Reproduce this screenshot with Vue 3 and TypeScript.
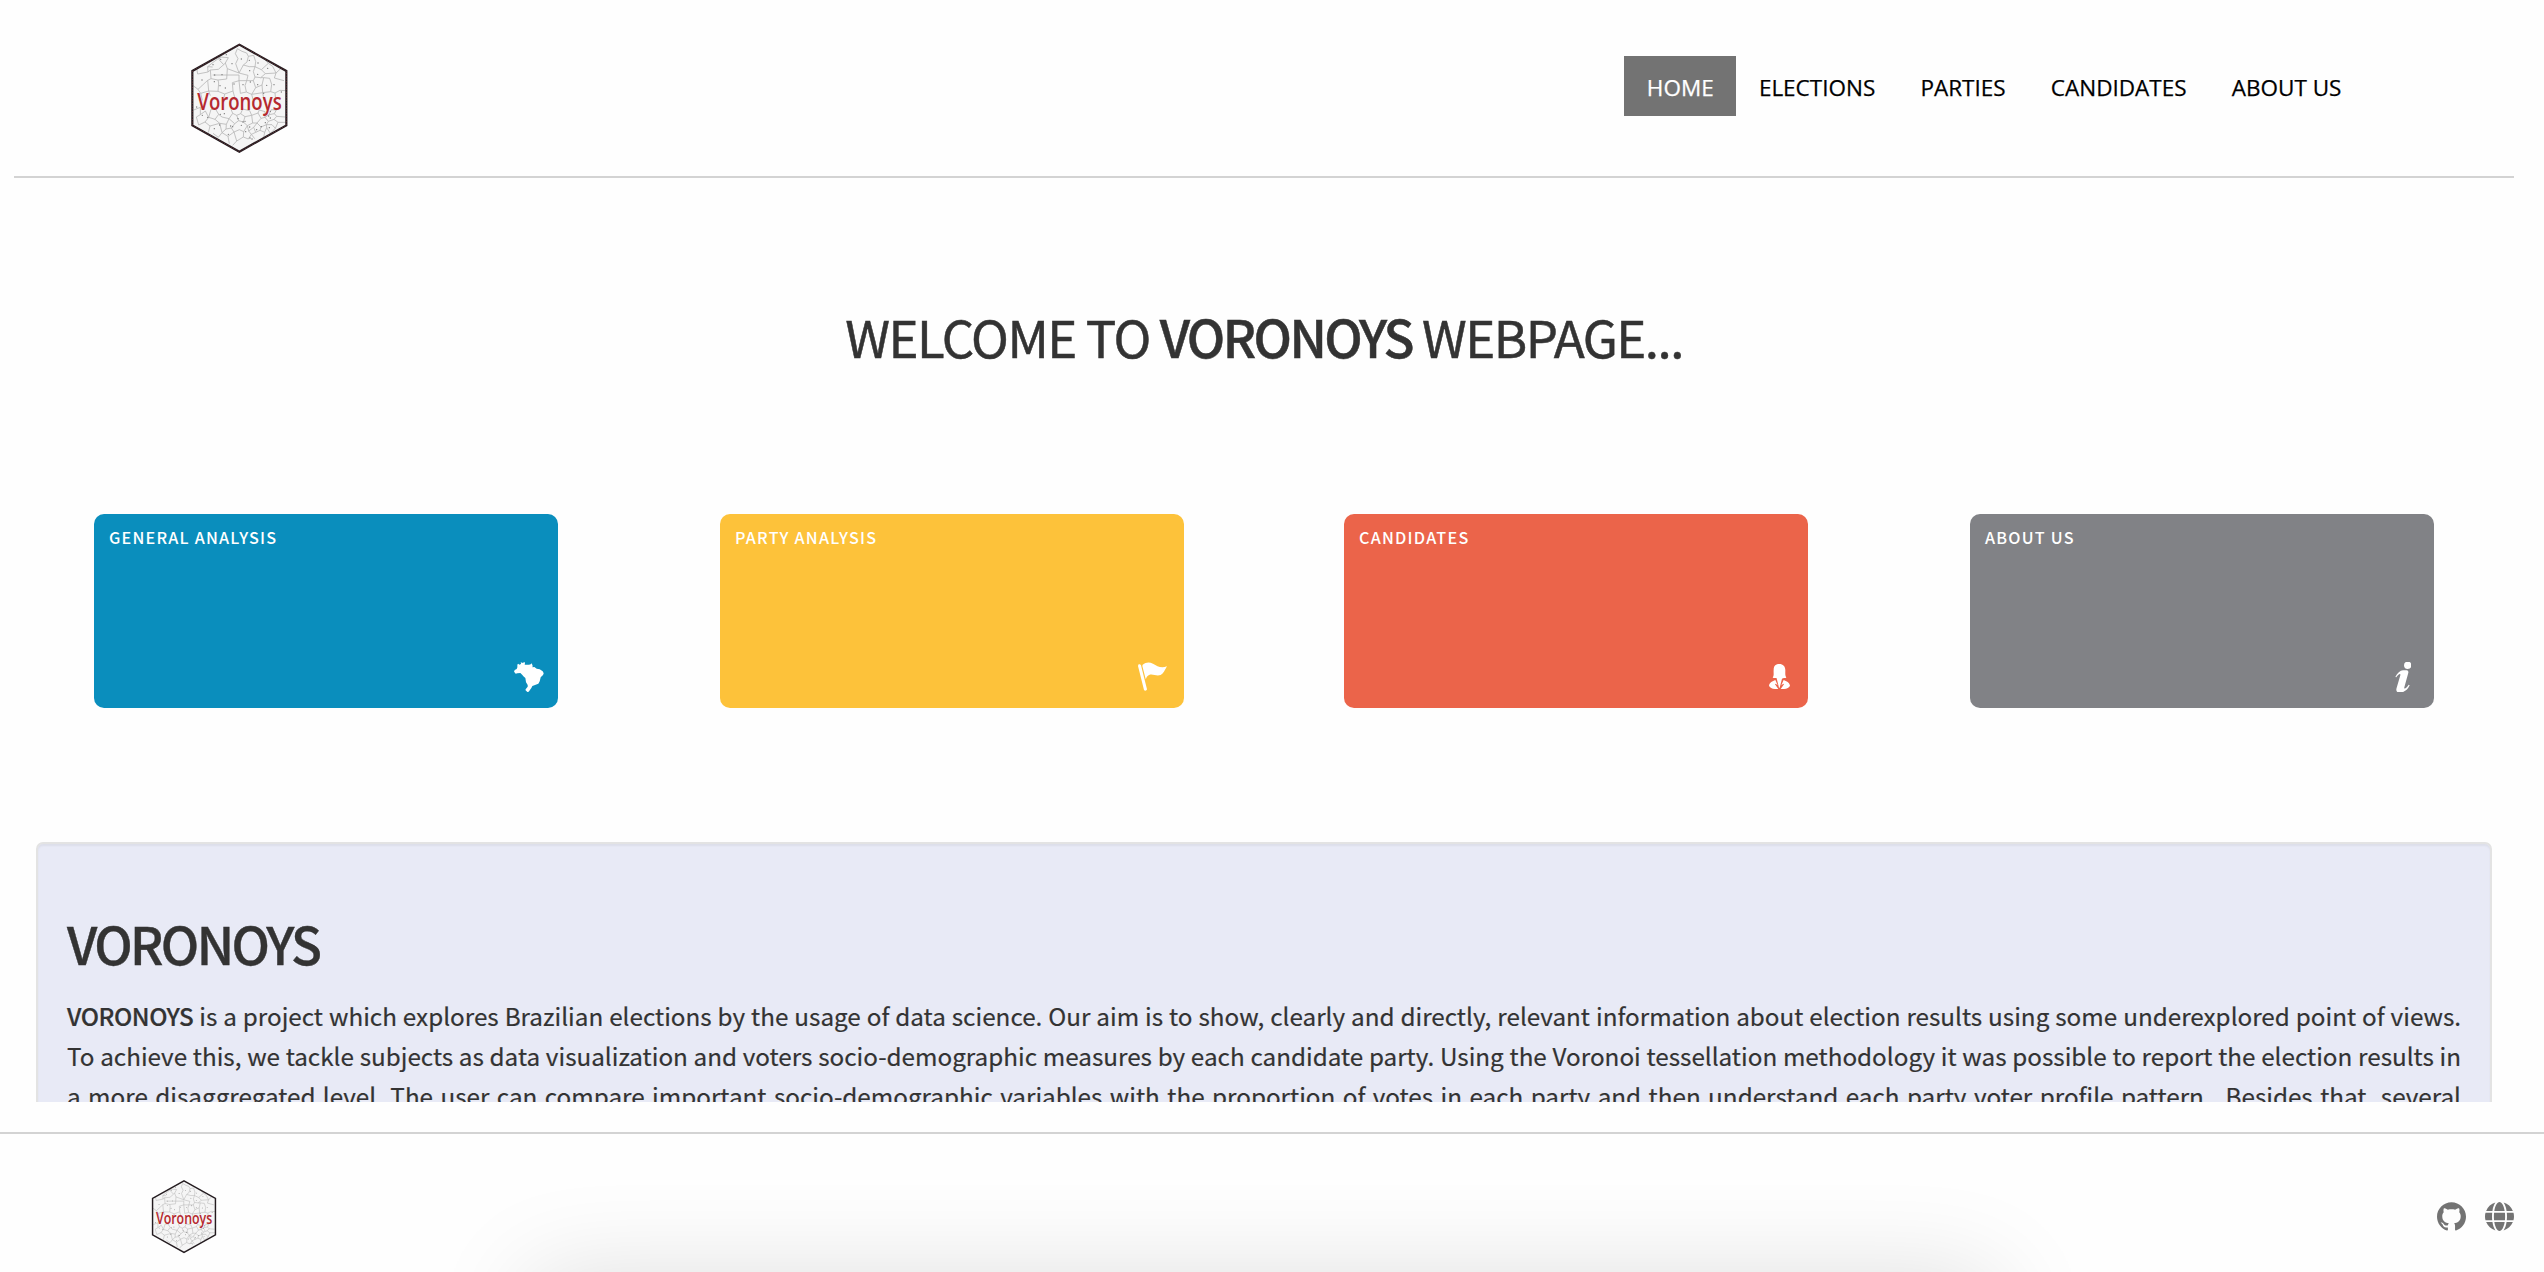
<script setup lang="ts">
interface Card {
  title: string
  color: string
  viewBox: string
  width: number
  height: number
  right: number
  bottom: number
  path: string
}

const menu: string[] = ['HOME', 'ELECTIONS', 'PARTIES', 'CANDIDATES', 'ABOUT US']

const cards: Card[] = [
  {
    title: 'GENERAL ANALYSIS', color: '#0a8ebd', viewBox: '0 0 88 90', width: 29.4, height: 30, right: 14.3, bottom: 16,
    path: 'M10 8L12 5L17 8L21 5L20 1L27 3L30 0L33 2L32 8L38 8L45 8L50 7L53 4L56 12L55 16L61 15L68 20L77 22L86 28L89 34L87 39L80 46L77 58L73 65L63 69L55 72L52 78L44 89L40 90L34 84L36 80L41 74L41 69L36 61L34 48L28 43L25 39L19 33L10 34L5 35L0 29L2 24L8 21L10 16Z'
  },
  {
    title: 'PARTY ANALYSIS', color: '#fdc23a', viewBox: '0 0 87 86', width: 29, height: 28.7, right: 17, bottom: 17,
    path: 'M1 8C3 5 8 7 9 10L27 82C26 87 20 87 18 84L0 12ZM14 8C24 0 34-1 45 5C58 12 68 20 87 13C80 25 77 34 68 39C51 45 40 29 26 45C25 49 23 51 23 51L13 12Z'
  },
  {
    title: 'CANDIDATES', color: '#eb644a', viewBox: '0 0 63 76', width: 21, height: 25.4, right: 18.3, bottom: 18.6,
    path: 'M11 40C16 34 13 26 14 17C14 5 21 0 31 0C42 0 49 7 49 19C49 29 48 34 52 41C48 43 43 41 39 44L38 48L32 71L30 71L24 47L23 43C20 41 14 44 11 40ZM19 48L26 64L20 59L18 61L28 75C15 76 3 73 0 65C2 55 10 52 19 48ZM44 48C53 52 61 55 63 65C60 73 48 76 35 75L45 61L43 59L37 64Z'
  },
  {
    title: 'ABOUT US', color: '#818286', viewBox: '0 0 50 92', width: 16.7, height: 30.7, right: 22.6, bottom: 15.7,
    path: 'M49 10A11 11 0 1 1 27 10A11 11 0 0 1 49 10ZM1 45C7 33 15 26 24 25H35Q41 25 40 32L28 76C26 83 35 79 41 68L44 70C38 83 29 91 14 92C5 92 2 86 5 77L16 40C18 32 9 36 4 46Z'
  }
]

const cellLines: string =
  'M80 114L83 131L114 125L113 109L128 110M113 109L132 94L151 80L175 82L166 98L172 115L207 128L197 100L204 85L196 70L202 55L216 63L230 68L235 78L231 95L220 104L207 128' +
  'M151 80L147 88L161 103L166 98M114 125L121 119L145 117L161 103M121 119L123 145L113 150L84 177L68 165M123 145L144 149L170 146L172 115M128 134H207V151L187 157L189 182L164 191L144 183L146 158L144 149' +
  'M113 150L116 182L144 183M84 177L92 189L116 182L121 196M207 128L234 135L230 151L207 151M235 78L251 75L257 94L255 109L238 109L220 104M255 109L274 118L295 99L284 88M274 118L286 130L318 128L333 114M295 99L308 108L318 128L313 143L342 151' +
  'M255 109L250 124L255 140L250 151L230 151L225 166L229 185L211 189L207 151M255 140L272 142L286 130M250 151L257 172L276 164L281 142L272 142M276 164L278 187L302 184L305 162L299 144L281 142M302 184L315 188L330 180L347 181M315 188L317 209M257 172L245 192L249 208M229 185L245 192L278 187L282 210' +
  'M189 182L195 205M164 191L160 211M92 189L97 210M71 239L91 231L91 253L79 260L86 284L105 275L116 261L106 242L91 253M105 275L120 287L115 307M116 261L135 267L146 252L137 237L123 237L116 261M146 252L156 260L177 265L169 282L149 279L135 267M120 287L149 279L156 307L145 321L129 309' +
  'M169 282L168 296L156 307L174 318L192 305L184 293L194 280L177 265L188 249L200 255L206 271L194 280M168 296L184 293M174 318L178 340M192 305L200 332L188 345M188 249L183 237M200 255L212 250L225 259L220 275L206 271M212 250L218 236L239 241L245 255L225 259M220 275L232 286L248 278L245 255L264 248L273 264L261 278L248 278' +
  'M192 305L208 298L221 304L232 286M221 304L220 320L200 332M220 320L235 326L244 312L236 302L251 291L261 278L273 290L289 283L295 273L285 261L273 264M236 302L232 286M251 291L257 306L244 312L254 325M257 306L270 300L273 290M270 300L284 306L290 292L289 283L306 283L316 294L301 309L290 292M284 306L281 321M295 273L312 267L324 276L316 294M264 248L268 239L285 244L285 261L297 253L304 238L319 239L313 250L320 258L345 260M313 250L297 253M320 258L312 267M324 276L347 276'

const cellPoints: number[][] = [
  [96,149],[134,134],[133,154],[156,133],[152,87],[186,100],[214,86],[238,90],[169,73],[239,121],[263,132],[293,114],[290,165],[312,163],[241,155],[219,163],[192,161],[150,166],[166,173],[263,163],[334,185],[264,98],[84,101],[281,189],[97,255],[113,261],[151,252],[163,250],[214,285],[227,304],[219,275],[204,265],[188,289],[182,287],[175,312],[133,295],[246,326],[240,323],[296,257],[301,263],[286,277],[274,289],[298,292],[239,290],[260,298],[301,243],[80,230],[149,284],[129,103],[225,273]
]

const githubPath: string =
  'M12 .297c-6.63 0-12 5.373-12 12 0 5.303 3.438 9.8 8.205 11.385.6.113.82-.258.82-.577 0-.285-.01-1.04-.015-2.04-3.338.724-4.042-1.61-4.042-1.61C4.422 18.07 3.633 17.7 3.633 17.7c-1.087-.744.084-.729.084-.729 1.205.084 1.838 1.236 1.838 1.236 1.07 1.835 2.809 1.305 3.495.998.108-.776.417-1.305.76-1.605-2.665-.3-5.466-1.332-5.466-5.93 0-1.31.465-2.38 1.235-3.22-.135-.303-.54-1.523.105-3.176 0 0 1.005-.322 3.3 1.23.96-.267 1.98-.399 3-.405 1.02.006 2.04.138 3 .405 2.28-1.552 3.285-1.23 3.285-1.23.645 1.653.24 2.873.12 3.176.765.84 1.23 1.91 1.23 3.22 0 4.61-2.805 5.625-5.475 5.92.42.36.81 1.096.81 2.22 0 1.606-.015 2.896-.015 3.286 0 .315.21.69.825.57C20.565 22.092 24 17.592 24 12.297c0-6.627-5.373-12-12-12'

const globePath: string =
  'M336.5 160C322 70.7 287.8 8 248 8s-74 62.7-88.5 152h177zM152 256c0 22.2 1.2 43.5 3.3 64h185.3c2.1-20.5 3.3-41.8 3.3-64s-1.2-43.5-3.3-64H155.3c-2.1 20.5-3.3 41.8-3.3 64zm324.7-96c-28.6-67.9-86.5-120.4-158-141.6 24.4 33.8 41.2 84.7 50 141.6h108zM177.2 18.4C105.8 39.6 47.8 92.1 19.3 160h108c8.7-56.9 25.5-107.8 49.9-141.6zM487.4 192H372.7c2.1 21 3.3 42.5 3.3 64s-1.2 43-3.3 64h114.6c5.5-20.5 8.6-41.8 8.6-64s-3.1-43.5-8.5-64zM120 256c0-21.5 1.2-43 3.3-64H8.6C3.2 212.5 0 233.8 0 256s3.2 43.5 8.6 64h114.6c-2-21-3.2-42.5-3.2-64zm39.5 96c14.5 89.3 48.7 152 88.5 152s74-62.7 88.5-152h-177zm159.3 141.6c71.4-21.2 129.4-73.7 158-141.6h-108c-8.8 56.9-25.6 107.8-50 141.6zM19.3 352c28.6 67.9 86.5 120.4 158 141.6-24.4-33.8-41.2-84.7-50-141.6h-108z'
</script>

<template>
  <div class="page">
    <header class="header">
      <svg class="logo" viewBox="60 35 296 336">
        <defs>
          <clipPath id="hexagon"><path d="M208 43L349 122V285L208 364L67 285V122Z" /></clipPath>
        </defs>
        <path class="hex-fill" d="M208 43L349 122V285L208 364L67 285V122Z" />
        <g clip-path="url(#hexagon)">
          <path class="cells" :d="cellLines" />
          <circle v-for="(p, i) in cellPoints" :key="i" :cx="p[0]" :cy="p[1]" r="2" class="point" />
        </g>
        <path class="hex-line" d="M208 43L349 122V285L208 364L67 285V122Z" />
        <path class="hex-dots" d="M208 43L349 122V285L208 364L67 285V122Z" />
        <text class="brand" x="82" y="238" textLength="253" lengthAdjust="spacingAndGlyphs">Voronoys</text>
      </svg>
      <nav class="menu">
        <a v-for="(item, i) in menu" :key="item" class="menu-item" :class="{ active: i === 0 }">{{ item }}</a>
      </nav>
    </header>

    <main class="content">
      <h1 class="welcome">WELCOME TO <b>VORONOYS</b> WEBPAGE...</h1>

      <section class="cards">
        <article v-for="card in cards" :key="card.title" class="card" :style="{ background: card.color }">
          <span class="card-title">{{ card.title }}</span>
          <svg
            class="card-icon"
            :viewBox="card.viewBox"
            :style="{ width: card.width + 'px', height: card.height + 'px', marginRight: card.right + 'px', marginBottom: card.bottom + 'px' }"
          ><path :d="card.path" /></svg>
        </article>
      </section>

      <section class="well">
        <h2 class="well-title">VORONOYS</h2>
        <p class="text">
          <span class="line"><b>VORONOYS</b> is a project which explores Brazilian elections by the usage of data science. Our aim is to show, clearly and directly, relevant information about election results using some underexplored point of views.</span>
          <span class="line">To achieve this, we tackle subjects as data visualization and voters socio-demographic measures by each candidate party. Using the Voronoi tessellation methodology it was possible to report the election results in</span>
          <span class="line">a more disaggregated level. The user can compare important socio-demographic variables with the proportion of votes in each party and then understand each party voter profile pattern. &nbsp;Besides that, several</span>
        </p>
      </section>
    </main>

    <footer class="footer">
      <svg class="logo-small" viewBox="60 35 296 336">
        <path class="hex-fill" d="M208 43L349 122V285L208 364L67 285V122Z" />
        <g clip-path="url(#hexagon)">
          <path class="cells" :d="cellLines" />
          <circle v-for="(p, i) in cellPoints" :key="i" :cx="p[0]" :cy="p[1]" r="2" class="point" />
        </g>
        <path class="hex-line" d="M208 43L349 122V285L208 364L67 285V122Z" />
        <text class="brand" x="82" y="238" textLength="253" lengthAdjust="spacingAndGlyphs">Voronoys</text>
      </svg>
      <div class="links">
        <svg class="link" viewBox="0 .297 24 23.5"><path :d="githubPath" /></svg>
        <svg class="link" viewBox="0 8 496 496"><path :d="globePath" /></svg>
      </div>
    </footer>
  </div>
</template>

<style>
body {
  margin: 0;
  background: #fff;
  overflow: hidden;
}
</style>

<style scoped>
.page {
  display: flex;
  flex-direction: column;
  width: 2544px;
  height: 1272px;
  overflow: hidden;
  background: #fefefe;
  color: #333;
  font-family: "Noto Sans CJK SC", "Open Sans", sans-serif;
}
.header {
  display: flex;
  justify-content: space-between;
  align-items: flex-start;
  box-sizing: border-box;
  flex: none;
  height: 178px;
  margin: 0 30px 0 14px;
  padding: 42px 150px 0 176px;
  border-bottom: 2px solid #d3d3d3;
}
.logo {
  width: 98.7px;
  height: 112px;
  overflow: visible;
}
.hex-fill {
  fill: #f5f5f5;
}
.cells {
  fill: none;
  stroke: #b5b5b5;
  stroke-width: 2.4;
}
.point {
  fill: #777;
}
.hex-line {
  fill: none;
  stroke: #241c20;
  stroke-width: 6.5;
}
.hex-dots {
  fill: none;
  stroke: #8d3f43;
  stroke-width: 2;
  stroke-dasharray: 3 5;
}
.brand {
  fill: #b5292f;
  font: 600 72px "Open Sans", sans-serif;
}
.menu {
  display: flex;
  margin-top: 14px;
}
.menu-item {
  height: 60px;
  padding: 0 22.6px;
  color: #000;
  font: 22.5px/63px "Open Sans", sans-serif;
  -webkit-text-stroke: .25px currentColor;
}
.menu-item.active {
  background: #737373;
  color: #fff;
}
.content {
  flex: none;
  height: 924px;
  overflow: hidden;
}
.welcome {
  margin: 120px 16px 0 0;
  font-size: 51px;
  line-height: 76px;
  font-weight: 400;
  letter-spacing: -1.5px;
  text-align: center;
  -webkit-text-stroke: .5px currentColor;
}
b {
  font-weight: 500;
}
.welcome b {
  letter-spacing: -2.6px;
}
.text b {
  letter-spacing: -.45px;
}
.cards {
  display: grid;
  grid-template-columns: 626px 624px 626px 464px;
  margin: 140px 110px 0 94px;
}
.card {
  display: flex;
  flex-direction: column;
  justify-content: space-between;
  width: 464px;
  height: 194px;
  border-radius: 10px;
}
.card-title {
  padding: 11px 0 0 15px;
  color: #fff;
  font-size: 16.2px;
  line-height: 24px;
  font-weight: 500;
  letter-spacing: 1.22px;
}
.card-icon {
  align-self: flex-end;
  fill: #fff;
}
.well {
  box-sizing: border-box;
  height: 500px;
  margin: 134px 52px 0 36px;
  padding: 61px 29px 0 29px;
  border: 2px solid #e3e3e3;
  border-radius: 7px;
  background: #e8eaf6;
  box-shadow: inset 0 2px 2px rgba(0, 0, 0, .05);
}
.well-title {
  margin: 0;
  font-size: 51px;
  line-height: 76px;
  font-weight: 500;
  letter-spacing: -2.6px;
  -webkit-text-stroke: .4px currentColor;
}
.text {
  margin: 15px 0 0;
  font-size: 24.25px;
  line-height: 40px;
  -webkit-text-stroke: .2px currentColor;
}
.line {
  display: block;
  white-space: nowrap;
  text-align: justify;
  text-align-last: justify;
}
.footer {
  position: relative;
  display: flex;
  justify-content: space-between;
  align-items: flex-start;
  box-sizing: border-box;
  flex: none;
  height: 140px;
  margin-top: 30px;
  padding: 45px 30px 0 151px;
  border-top: 2px solid #d3d3d3;
  overflow: hidden;
}
.footer::after {
  content: "";
  position: absolute;
  left: 530px;
  top: 142px;
  width: 1465px;
  height: 200px;
  box-shadow: 0 0 100px rgba(0, 0, 0, .13);
}
.logo-small {
  width: 66px;
  height: 75px;
  overflow: visible;
}
.links {
  display: flex;
  gap: 19px;
  padding-top: 23px;
}
.link {
  width: 29px;
  height: 29px;
  fill: #737373;
}
</style>
